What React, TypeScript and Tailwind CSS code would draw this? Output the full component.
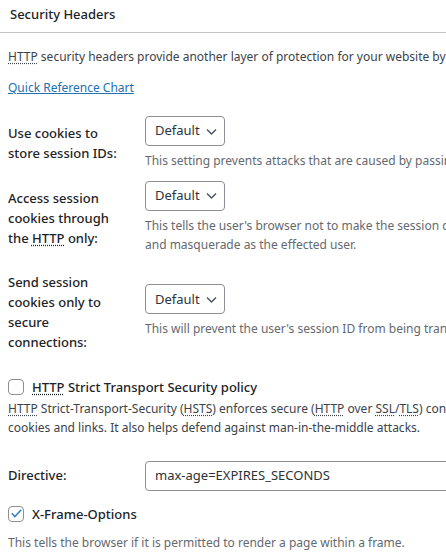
import React from "react";

const font = { fontFamily: '"Noto Sans", "Open Sans", sans-serif' };

function Abbr({ children }: { children: React.ReactNode }) {
  return (
    <abbr title="" className="underline decoration-dotted underline-offset-2">
      {children}
    </abbr>
  );
}

function Select() {
  return (
    <div className="flex h-[30px] w-[80px] items-center justify-between rounded-[4px] border border-[#8c8f94] bg-white pl-[9px] pr-[7px] text-[13px] text-[#2c3338]">
      <span>Default</span>
      <svg width="11" height="8" viewBox="0 0 11 8" className="mt-[1px]">
        <path d="M1 1.5l4.5 4.5 4.5-4.5" fill="none" stroke="#50575e" strokeWidth="1.5" />
      </svg>
    </div>
  );
}

function Row({ label, desc }: { label: React.ReactNode; desc: React.ReactNode }) {
  return (
    <div className="flex items-center">
      <div className="w-[137px] shrink-0 py-3 pr-[14px] text-[13px] font-medium leading-[20px] text-[#1d2327]">{label}</div>
      <div className="min-w-0 flex-1 py-[5px]">
        <Select />
        <p className="mt-[5px] whitespace-nowrap text-[12px] leading-[19.5px] text-[#646970]">{desc}</p>
      </div>
    </div>
  );
}

function Checkbox({ checked }: { checked?: boolean }) {
  return (
    <span className="flex h-[16px] w-[16px] shrink-0 items-center justify-center rounded-[4px] border border-[#8c8f94] bg-white">
      {checked && (
        <svg width="13" height="13" viewBox="0 0 20 20">
          <path d="M3.5 10.5l4 4.2L16.5 5" fill="none" stroke="#3582c4" strokeWidth="2.4" strokeLinecap="square" />
        </svg>
      )}
    </span>
  );
}

export default function App() {
  return (
    <div className="h-[559px] w-[446px] overflow-hidden bg-white text-[#3c434a]" style={font}>
      <div className="flex h-[33px] items-center border-b border-[#c3c4c7] px-[10px] pb-[3px]">
        <h2 className="text-[13px] font-medium text-[#1d2327]">Security Headers</h2>
      </div>
      <div className="px-[8px]">
        <p className="mt-[14px] whitespace-nowrap text-[12px] leading-[20px]">
          <Abbr>HTTP</Abbr> security headers provide another layer of protection for your website by
        </p>
        <p className="mt-[11px] text-[12px] leading-[20px]">
          <a className="text-[#2271b1] underline">Quick Reference Chart</a>
        </p>
        <div className="mt-[13px]">
          <Row
            label={<>Use cookies to store session IDs:</>}
            desc={<>This setting prevents attacks that are caused by passing session IDs in URLs.</>}
          />
          <Row
            label={<>Access session cookies through the <Abbr>HTTP</Abbr> only:</>}
            desc={
              <>
                This tells the user's browser not to make the session cookie accessible to client side scripting
                <br />
                and masquerade as the effected user.
              </>
            }
          />
          <Row
            label={<>Send session cookies only to secure connections:</>}
            desc={<>This will prevent the user's session ID from being transmitted in plain text.</>}
          />
        </div>
        <div className="mt-[13px] flex items-center gap-[8px]">
          <Checkbox />
          <span className="text-[13px] font-medium leading-[20px] text-[#1d2327]">
            <Abbr>HTTP</Abbr> Strict Transport Security policy
          </span>
        </div>
        <p className="mt-[2px] whitespace-nowrap text-[12px] leading-[19.5px] text-[#3c434a]">
          <Abbr>HTTP</Abbr> Strict-Transport-Security (<Abbr>HSTS</Abbr>) enforces secure (<Abbr>HTTP</Abbr> over{" "}
          <Abbr>SSL</Abbr>/<Abbr>TLS</Abbr>) connections to the server.
          <br />
          cookies and links. It also helps defend against man-in-the-middle attacks.
        </p>
        <div className="mt-[23px] flex items-center">
          <div className="w-[137px] shrink-0 text-[13px] font-medium text-[#1d2327]">Directive:</div>
          <div className="flex h-[30px] w-[400px] shrink-0 items-center rounded-[4px] border border-[#8c8f94] px-[9px] text-[13px] text-[#2c3338]">
            max-age=EXPIRES_SECONDS
          </div>
        </div>
        <div className="mt-[13px] flex items-center gap-[8px]">
          <Checkbox checked />
          <span className="text-[13px] font-medium leading-[20px] text-[#1d2327]">X-Frame-Options</span>
        </div>
        <p className="mt-[9px] whitespace-nowrap text-[12px] leading-[20px] text-[#646970]">
          This tells the browser if it is permitted to render a page within a frame.
        </p>
      </div>
    </div>
  );
}
